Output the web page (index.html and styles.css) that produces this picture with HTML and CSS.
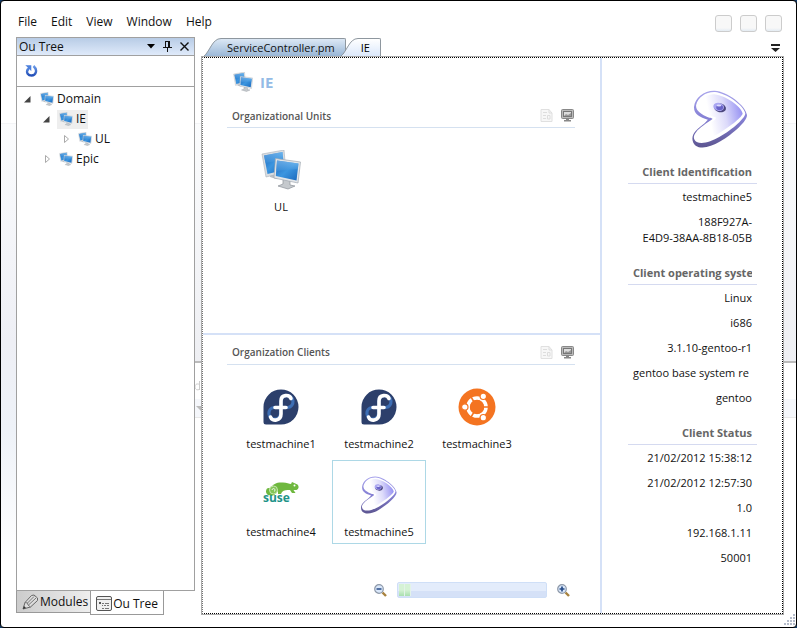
FILE: index.html
```html
<!DOCTYPE html>
<html lang="en">
<head>
<meta charset="utf-8">
<title>Ou Tree - IE</title>
<link rel="stylesheet" href="styles.css">
</head>
<body>
<svg class="defs" aria-hidden="true">
  <defs>
    <linearGradient id="screen" x1="0" y1="0" x2="1" y2="1"><stop offset="0" stop-color="#1c62b8"/><stop offset=".5" stop-color="#3c96e0"/><stop offset="1" stop-color="#1a68bc"/></linearGradient>
    <linearGradient id="gloss" x1="0" y1="0" x2="0" y2="1"><stop offset="0" stop-color="#8cc8f6"/><stop offset="1" stop-color="#3b90da"/></linearGradient>
    <linearGradient id="gentooFill" x1="0" y1=".5" x2="1" y2=".3"><stop offset=".25" stop-color="#fff"/><stop offset=".6" stop-color="#dcdafa"/><stop offset="1" stop-color="#928df2"/></linearGradient>
    <linearGradient id="gentooEdge" x1="0" y1="0" x2="0" y2="1"><stop offset="0" stop-color="#a8a4ec"/><stop offset=".5" stop-color="#8580d4"/><stop offset="1" stop-color="#5c5590"/></linearGradient>
    <linearGradient id="tabIdle" x1="0" y1="0" x2="0" y2="1"><stop offset="0" stop-color="#dce8f5"/><stop offset="1" stop-color="#98b6d6"/></linearGradient>
    <linearGradient id="tabActive" x1="0" y1="0" x2="0" y2="1"><stop offset="0" stop-color="#fff"/><stop offset="1" stop-color="#dbe8fb"/></linearGradient>
    <linearGradient id="arrowBlue" x1="0" y1="0" x2="0" y2="1"><stop offset="0" stop-color="#6a9ae8"/><stop offset="1" stop-color="#2450b8"/></linearGradient>
  </defs>
  <symbol id="computers" viewBox="0 0 40 40">
    <path d="M9 24l6-1 1 3 5 1-6 2-6-2z" fill="#b9bec4"/>
    <path d="M1 4L23 0l2 22-20 5z" fill="#d9dde1" stroke="#a9b0b8" stroke-width=".6"/>
    <path d="M3 5.500L21.500 2l1.700 18L6.500 24z" fill="url(#screen)"/>
    <path d="M3 5.500L21.500 2l.9 8L4.500 13z" fill="url(#gloss)" opacity=".6"/>
    <path d="M22 29l7 2v4l5 1-7 3-10-3 5-2z" fill="#c5c9cd" stroke="#8c9299" stroke-width=".7"/>
    <path d="M14.500 8.500L39.500 12 37 33 13 28z" fill="#e3e6e9" stroke="#a4abb3" stroke-width=".7"/>
    <path d="M16 10.500L37.500 13.500 35.500 30.500 14.800 26z" fill="url(#screen)"/>
    <path d="M16 10.500L37.500 13.500 36.900 19 15.300 21z" fill="url(#gloss)" opacity=".65"/>
  </symbol>
  <symbol id="gentoo" viewBox="0 0 164 172">
    <path d="M46 88C22 80 4 72 5 50 8 22 35 1 66 2c38 2 92 44 96 72 1 18-39 54-80 79-28 17-56 23-72 12-13-9-13-31-1-43 12-13 24-18 37-34z" fill="url(#gentooEdge)"/>
    <path d="M50 82C26 72 10 62 11 45 17 21 40 5 67 6c33 3 86 40 90 63 1 13-36 47-76 70-26 15-53 23-68 15-12-8-10-20-2-29 11-14 31-26 48-38 3-3-5-5-9-5z" fill="#fff"/>
    <path d="M66 80C40 72 19 60 20 45 26 23 45 12 67 13c30 2 78 35 82 56 1 9-34 38-71 60-25 15-48 20-58 14-7-5-5-13 2-20 12-12 30-24 45-35 4-4 3-7-1-8z" fill="url(#gentooFill)"/>
    <ellipse cx="82" cy="53" rx="18" ry="13" fill="#4c477f" transform="rotate(12 82 53)"/>
    <ellipse cx="78" cy="50" rx="16" ry="12" fill="#aaa6f2" transform="rotate(12 78 50)"/>
    <ellipse cx="81" cy="52" rx="10" ry="8" fill="#6a63c8"/>
    <ellipse cx="79" cy="46" rx="7" ry="3" fill="#dedcff"/>
  </symbol>
  <symbol id="fedora" viewBox="0 0 36 36">
    <path d="M18 .5A17.500 17.500 0 1 1 18 35.500H3A2.500 2.500 0 0 1 .5 33V18A17.500 17.500 0 0 1 18 .5z" fill="#2c3f6b"/>
    <path d="M17.500 18.500H11a5.800 5.800 0 1 0 6.500 6zM18 18.500h7a6 6 0 1 0-7-6z" fill="none" stroke="#3d6eb4" stroke-width="3.200"/>
    <path d="M28 9.500C26.500 5.500 18 5 18 12v13c0 7-9 8-10.500 3M12 18.500h11" fill="none" stroke="#fff" stroke-width="3.600" stroke-linecap="round"/>
  </symbol>
  <symbol id="ubuntu" viewBox="0 0 38 38">
    <circle cx="19" cy="19" r="18.500" fill="#f47421"/>
    <circle cx="19" cy="19" r="9" fill="none" stroke="#fff" stroke-width="3.600"/>
    <path d="M19 19h15M19 19l-8-13.500M19 19l-8 13.500" stroke="#f47421" stroke-width="1.500"/>
    <g fill="#fff" stroke="#f47421" stroke-width="1.200"><circle cx="6.800" cy="19" r="3.200"/><circle cx="25.300" cy="8.300" r="3.200"/><circle cx="25.300" cy="29.700" r="3.200"/></g>
    <circle cx="19" cy="19" r="7" fill="#f47421"/>
  </symbol>
  <symbol id="document" viewBox="0 0 13 13">
    <path d="M1 .5h8L12 4v8.500H1z" fill="#f7f7f7" stroke="#e0e0e0"/><path d="M9 .5V4h3M3 3.500h4M3 6.500h3M3 9.500h3M7.500 6.500H10v3.500H7.500z" fill="none" stroke="#ddd"/>
  </symbol>
  <symbol id="monitor" viewBox="0 0 13 13">
    <rect x=".5" y=".5" width="12" height="9" rx="1" fill="#bbb" stroke="#888"/><rect x="2.500" y="2.500" width="8" height="5" fill="#ddd" stroke="#777"/><path d="M3 7l2-2 2 1 3-2v3z" fill="#999"/><path d="M5 10h3v1h2v1.500H3V11h2z" fill="#888"/>
  </symbol>
</svg>

<div class="window">
  <header class="titlebar">
    <nav class="menu" aria-label="Main menu">
      <button>File</button><button>Edit</button><button>View</button><button>Window</button><button>Help</button>
    </nav>
    <div class="controls">
      <button aria-label="Minimize"></button><button aria-label="Maximize"></button><button aria-label="Close"></button>
    </div>
  </header>

  <div class="workspace">
    <section class="dock">
      <div class="panel">
        <div class="panel-head">
          <h2>Ou Tree</h2>
          <button aria-label="Panel options"><svg width="8" height="5"><path d="M0 0h8L4 4.500z"/></svg></button>
          <button aria-label="Pin"><svg width="9" height="11"><path d="M2.500 0v6M6.500 0v6M2 .5h5M0 6.500h9M4.500 7v4M5.500 1v5" fill="none" stroke="#111"/></svg></button>
          <button aria-label="Close panel"><svg width="9" height="9"><path d="M.5.5l8 8M8.500.5l-8 8" fill="none" stroke="#111" stroke-width="1.400"/></svg></button>
        </div>
        <div class="panel-tools">
          <button aria-label="Refresh"><svg width="13" height="13" viewBox="0 0 13 13"><path d="M3 5C.5 9 3.500 11.500 6.500 11.500c4.500 0 6.500-5.500 2-9.500" fill="none" stroke="url(#arrowBlue)" stroke-width="2.400"/><path d="M.3 1.200h6v6L4.500 5.200 3 7 1.800 5.500 2.800 3.500z" fill="#4d80dc"/></svg></button>
        </div>
        <ul class="tree">
          <li>
            <div class="row"><svg class="arrow"><path d="M6.500 2v6.500H0z" fill="#444"/></svg><button><svg class="node"><use href="#computers"/></svg>Domain</button></div>
            <ul>
              <li>
                <div class="row"><svg class="arrow"><path d="M6.500 2v6.500H0z" fill="#444"/></svg><button class="selected"><svg class="node"><use href="#computers"/></svg>IE</button></div>
                <ul><li><div class="row"><svg class="arrow"><path d="M2.500 1.500v7L6.500 5z" fill="#fff" stroke="#aaa"/></svg><button><svg class="node"><use href="#computers"/></svg>UL</button></div></li></ul>
              </li>
              <li><div class="row"><svg class="arrow"><path d="M2.500 1.500v7L6.500 5z" fill="#fff" stroke="#aaa"/></svg><button><svg class="node"><use href="#computers"/></svg>Epic</button></div></li>
            </ul>
          </li>
        </ul>
      </div>
      <div class="dock-tabs">
        <button><svg width="17" height="16" viewBox="0 0 17 16"><path d="M1 15L3 8.500 9.500 1.500 12 1l3.500 3v2.500L8.500 13z" fill="#ddd" stroke="#666"/><path d="M3 8.500l2.500.5.500 2 2.500 2M5.500 9L12 2.500M6.500 11L14 4" fill="none" stroke="#777"/><path d="M1 15l1-3 2 2z" fill="#333"/></svg>Modules</button>
        <button class="current"><svg width="16" height="15" viewBox="0 0 16 15"><rect x=".5" y=".5" width="15" height="14" rx="1.500" fill="#f0f0f0" stroke="#555"/><path d="M1 3.500h14" stroke="#777"/><path d="M3 6h2v2H3z" fill="#555"/><path d="M6 7.500h2M9 7.500h4M6 9.500h1M8 9.500h2M11 9.500h2M6 12.500h2M9 12.500h4" stroke="#777"/></svg>Ou Tree</button>
      </div>
    </section>

    <div class="gap" aria-hidden="true"><svg width="6" height="34"><path d="M4.500 2v9M5 5.500C1 4 0 6 0 8s2 4 5 2" fill="none" stroke="#ccc"/><path d="M1 27h5v5z" fill="#bbb"/></svg></div>

    <main class="documents">
      <div class="doc-tabs">
        <button class="tab"><svg width="18" height="19"><path d="M0 19C7 14 9 .5 18 .5V19z" fill="url(#tabIdle)"/><path d="M0 19C7 14 9 .5 18 .5" fill="none" stroke="#8e979f"/></svg><span>ServiceController.pm</span></button>
        <button class="tab active"><svg width="18" height="19"><path d="M0 19C7 14 9 .5 18 .5V19z" fill="url(#tabActive)"/><path d="M0 19C7 14 9 .5 18 .5" fill="none" stroke="#8e979f"/></svg><span>IE</span></button>
        <button class="tab-list" aria-label="Open documents"><svg width="9" height="8"><path d="M0 0h9v2H0zM0 4h9L4.500 8z" fill="#222"/></svg></button>
      </div>
      <div class="doc">
        <div class="doc-inner">
          <div class="panes">
            <section class="pane">
              <h1><svg width="20" height="20"><use href="#computers"/></svg>IE</h1>
              <div class="group-head"><h3>Organizational Units</h3><button aria-label="Report"><svg><use href="#document"/></svg></button><button aria-label="Console"><svg><use href="#monitor"/></svg></button></div>
              <div class="tiles"><button class="tile"><svg width="40" height="40"><use href="#computers"/></svg><span>UL</span></button></div>
            </section>
            <section class="pane clients">
              <div class="group-head"><h3>Organization Clients</h3><button aria-label="Report"><svg><use href="#document"/></svg></button><button aria-label="Console"><svg><use href="#monitor"/></svg></button></div>
              <div class="tiles">
                <button class="tile"><svg width="36" height="36"><use href="#fedora"/></svg><span>testmachine1</span></button>
                <button class="tile"><svg width="36" height="36"><use href="#fedora"/></svg><span>testmachine2</span></button>
                <button class="tile"><svg width="38" height="38"><use href="#ubuntu"/></svg><span>testmachine3</span></button>
                <button class="tile"><svg width="36" height="36" viewBox="0 0 36 36"><path d="M7 12C10 6 15 5 20 5.500c4 .3 6 1.500 8 1.500l1-2 5.500 2.500c2 2 1 4.500-1 5.500h-3l2 3h-3.500l-2-3c-3 0-6 0-8 2l-1 2h-3v-3l-2 1c0 5-10 5-10-.5 0-4 3-4 4-3z" fill="#6fb83f"/><circle cx="10.500" cy="13" r="4" fill="#83c557" stroke="#c6e6ae"/><path d="M9 13a1.500 1.500 0 1 1 2 1.500" fill="none" stroke="#fff" stroke-width=".8"/><circle cx="31.500" cy="8.500" r="1" fill="#fff"/><text class="suse" x="0" y="25">suse</text></svg><span>testmachine4</span></button>
                <button class="tile chosen"><svg width="36" height="38"><use href="#gentoo"/></svg><span>testmachine5</span></button>
              </div>
              <div class="zoom">
                <button aria-label="Zoom out"><svg width="13" height="13"><path d="M8.500 8.500l3.500 3.500" stroke="#a8823e" stroke-width="2.400"/><circle cx="5" cy="5" r="4.300" fill="#d9e7fa" stroke="#8d98a8" stroke-width="1.200"/><path d="M2.500 5h5" stroke="#254a86" stroke-width="1.500"/></svg></button>
                <progress value="8" max="100" aria-label="Loading"></progress>
                <button aria-label="Zoom in"><svg width="13" height="13"><path d="M8.500 8.500l3.500 3.500" stroke="#a8823e" stroke-width="2.400"/><circle cx="5" cy="5" r="4.300" fill="#d9e7fa" stroke="#8d98a8" stroke-width="1.200"/><path d="M2.500 5h5M5 2.500v5" stroke="#254a86" stroke-width="1.700"/></svg></button>
              </div>
            </section>
          </div>
          <aside class="details">
            <svg class="logo" width="56" height="58"><use href="#gentoo"/></svg>
            <h4>Client Identification</h4>
            <p>testmachine5</p>
            <p>188F927A-<br>E4D9-38AA-8B18-05B</p>
            <h4 class="cut"><span>Client operating system</span></h4>
            <p>Linux</p>
            <p>i686</p>
            <p>3.1.10-gentoo-r1</p>
            <p class="cut">gentoo base system re</p>
            <p>gentoo</p>
            <h4>Client Status</h4>
            <p>21/02/2012 15:38:12</p>
            <p>21/02/2012 12:57:30</p>
            <p>1.0</p>
            <p>192.168.1.11</p>
            <p>50001</p>
          </aside>
        </div>
      </div>
    </main>
  </div>
  <svg class="grip" width="12" height="12" aria-hidden="true"><path d="M10 1h2M7 4h2M10 4h2M4 7h2M7 7h2M10 7h2M1 10h2M4 10h2M7 10h2M10 10h2" stroke="#b5bccb" stroke-width="2"/></svg>
</div>
</body>
</html>
```

FILE: styles.css
```css
* { box-sizing: border-box; }

body {
  margin: 0;
  background: #123a66;
  color: #111;
  font: 12px/16px "Open Sans", "Noto Sans", sans-serif;
}

h1, h2, h3, h4, p, ul { margin: 0; padding: 0; }
ul { list-style: none; }
svg { flex: none; display: block; }

button {
  margin: 0;
  padding: 0;
  border: 0;
  background: none;
  color: inherit;
  font: inherit;
}

.defs { position: absolute; width: 0; height: 0; }

.window {
  position: relative;
  display: flex;
  flex-direction: column;
  min-height: 100vh;
  padding: 0 12px 12px 15px;
  border: 1px solid #000;
  border-radius: 4px;
  background:
    linear-gradient(#fff 0 122px, #f3f4f6 122px 123px, #fbfcfd 123px, #eeeff5 340px, #eef2f8 430px, #fff 560px) 0 0 / 15px 100% no-repeat,
    linear-gradient(#fff 0 122px, #f3f4f6 122px 123px, #fbfcfd 123px, #eeeff3 360px, #bbb 360px 362px, #fff 362px 398px, #f5f7fb 398px 416px, #e8e8e8 416px 417px, #fff 417px);
}

.titlebar {
  display: flex;
  justify-content: space-between;
  height: 36px;
  padding: 13px 2px 0;
}
.menu { display: flex; gap: 14px; height: 16px; }
.controls { display: flex; gap: 8px; padding-top: 1px; }
.controls button {
  width: 17px;
  height: 17px;
  border: 1px solid #ccc;
  border-radius: 3px;
  background: linear-gradient(#f8f8f8 80%, #e3ebf3);
}

.workspace {
  flex: 1;
  display: grid;
  grid-template-columns: 179px 6px minmax(0, 1fr);
}

.dock { display: flex; flex-direction: column; }
.panel { flex: 1; border: 1px solid #a0a0a0; background: #fff; }
.panel-head {
  display: flex;
  align-items: center;
  gap: 8px;
  height: 18px;
  padding: 0 5px 0 2px;
  border-bottom: 1px solid #a0a0a0;
  background: linear-gradient(#b8cce6, #dfeafa);
}
.panel-head h2 { flex: 1; font-size: 12px; font-weight: 400; }
.panel-tools { height: 31px; padding: 8px; border-bottom: 1px solid #a0a0a0; }

.tree { padding: 2px 7px; }
.tree ul { padding-left: 19px; }
.row { display: flex; align-items: center; height: 20px; }
.arrow { width: 10px; height: 10px; margin-right: 4px; }
.row button { display: flex; align-items: center; gap: 3px; height: 19px; padding: 0 2px; }
.row .selected { background: #eee; }
.node { width: 14px; height: 14px; }

.dock-tabs { display: flex; align-items: flex-start; height: 24px; }
.dock-tabs button {
  display: flex;
  align-items: center;
  gap: 1px;
  height: 22px;
  padding: 0 2px 2px 5px;
  border: 1px solid #999;
  border-width: 0 0 1px 1px;
  background: linear-gradient(90deg, #ccc, #eee);
}
.dock-tabs button:first-child { padding-bottom: 0; }
.dock-tabs .current { height: 24px; padding: 2px 5px 0; border-right-width: 1px; background: #fff; }

.gap { padding-top: 342px; }

.documents { display: flex; flex-direction: column; }
.doc-tabs { display: flex; height: 19px; padding-left: 2px; font-size: 11px; }
.doc-tabs .tab { display: flex; margin-top: 1px; }
.tab span {
  height: 18px;
  padding: 1px 10px 0 6px;
  border: 1px solid #8e979f;
  border-width: 1px 1px 0 0;
  border-top-right-radius: 2px;
  background: linear-gradient(#dce8f5, #98b6d6);
}
.tab svg { height: 18px; }
.tab.active { z-index: 1; margin-left: -6px; color: #000; }
.tab.active span { padding: 1px 10px 0 3px; background: linear-gradient(#fff, #dbe8fb); }
.tab-list { margin: 3px 4px 0 auto; }

.doc { flex: 1; display: flex; border: 1px solid #aaa; background: #fff; font-size: 11px; }
.doc-inner {
  flex: 1;
  display: grid;
  grid-template-columns: minmax(0, 1fr) 182px;
  border: 1px dotted #000;
  border-left-color: #777;
}

.panes { display: grid; grid-template-rows: 275fr 281fr; }
.pane { display: flex; flex-direction: column; padding: 13px 25px 0 24px; }
.clients { padding: 6px 25px 15px 24px; border-top: 2px solid #d5e1f7; }

h1 {
  display: flex;
  align-items: center;
  gap: 7px;
  height: 22px;
  margin: 0 0 11px 6px;
  color: #94bbe6;
  font-size: 15px;
}
.group-head {
  display: flex;
  align-items: center;
  gap: 8px;
  height: 24px;
  padding: 0 1px 0 5px;
  border-bottom: 1px solid #d5e1f0;
}
.group-head h3 { flex: 1; color: #555; font-size: 10px; font-weight: 600; }
.group-head svg { width: 13px; height: 13px; }

.tiles {
  display: grid;
  grid-template-columns: repeat(auto-fill, 94px);
  gap: 4px;
  padding: 7px 7px 0;
}
.tile {
  display: grid;
  grid-template-rows: 44px 16px;
  gap: 7px;
  justify-items: center;
  align-items: center;
  height: 84px;
  padding: 12px 0 3px;
  border: 1px solid transparent;
}
.tile.chosen { border-color: #add8e6; }
.suse { fill: #1e9388; font: 700 12px "Open Sans", sans-serif; }

.zoom {
  display: flex;
  align-items: center;
  justify-content: flex-end;
  gap: 10px;
  margin-top: auto;
  padding-right: 5px;
}
progress {
  appearance: none;
  width: 150px;
  height: 16px;
  padding: 1px;
  border: 1px solid #cfdff7;
  border-radius: 2px;
  background: linear-gradient(#e3ecfb 55%, #d5e1f7 55%);
}
progress::-webkit-progress-bar { background: none; }
progress::-webkit-progress-value {
  background: repeating-linear-gradient(90deg, #fff0 0 5px, #e3f3e8 5px 6px), linear-gradient(#d5f2d5 50%, #a9dfae);
}

.details {
  padding: 32px 25px 0 26px;
  border-left: 2px solid #d5e1f7;
  text-align: right;
  overflow: hidden;
}
.logo { margin: 0 9px 1px auto; }
.details h4 {
  padding: 15px 5px 3px;
  border-bottom: 1px solid #d5daf0;
  color: #666;
  font-size: 11px;
  white-space: nowrap;
}
.details p { margin: 0 5px; padding: 5px 0 4px; white-space: nowrap; }
.details .cut { text-align: left; }
.cut span { display: block; overflow: hidden; }

.grip { position: absolute; right: 1px; bottom: 1px; }
```
